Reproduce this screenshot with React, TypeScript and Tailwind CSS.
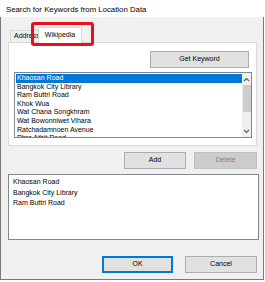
import { ReactNode } from "react";

const font = { fontFamily: '"Liberation Sans", Arial, sans-serif' };

function Chevron({ up }: { up?: boolean }) {
  return (
    <svg width="7" height="5" viewBox="0 0 7 5" className="block">
      <path d={up ? "M1 4 L3.5 1.5 L6 4" : "M1 1 L3.5 3.5 L6 1"} fill="none" stroke="#606060" strokeWidth="1.2" />
    </svg>
  );
}

function Button({ children, className = "", disabled = false, primary = false }: { children: ReactNode; className?: string; disabled?: boolean; primary?: boolean }) {
  return (
    <div
      className={`flex h-[17px] items-center justify-center border text-[7px] ${
        disabled
          ? "border-[#bfbfbf] bg-[#cccccc] text-[#838383]"
          : primary
            ? "border-[#0078d7] bg-[#e1e1e1] text-black shadow-[inset_0_0_0_1px_#0078d7]"
            : "border-[#adadad] bg-[#e1e1e1] text-black"
      } ${className}`}
    >
      {children}
    </div>
  );
}

const places = [
  "Khaosan Road",
  "Bangkok City Library",
  "Ram Buttri Road",
  "Khok Wua",
  "Wat Chana Songkhram",
  "Wat Bowonniwet Vihara",
  "Ratchadamnoen Avenue",
  "Phra Athit Road",
];

const chosen = ["Khaosan Road", "Bangkok City Library", "Ram Buttri Road"];

export default function App() {
  return (
    <div className="h-[282px] w-[265px] overflow-hidden bg-white text-black" style={font}>
      <div className="h-[17px] pl-[6px] pt-[5px] text-[7.8px] leading-[10px]">Search for Keywords from Location Data</div>

      <div className="relative h-[263px] w-[264px] border-x border-b border-[#7a7a7a] bg-[#f0f0f0] pl-[7px] pt-[10px]">
        {/* tabs */}
        <div className="relative z-10 -mb-px flex h-[16px] items-end pl-[2px]">
          <div className="mb-px flex h-[12px] w-[30px] items-center border-x border-t border-[#d9d9d9] bg-[#f0f0f0] pl-[3px] text-[7px]">
            Address
          </div>
          <div className="-ml-[2px] flex h-[16px] w-[44px] items-center justify-center border-x border-t border-[#d9d9d9] bg-white text-[7px]">
            Wikipedia
          </div>
        </div>
        <div className="absolute left-[30px] top-[5px] z-20 h-[24px] w-[63px] rounded-[3px] border-[3px] border-[#e8101a]" />

        {/* panel */}
        <div className="h-[104px] w-[249px] border border-[#d9d9d9] bg-white pt-[8px]">
          <div className="flex justify-end pr-[7px]">
            <Button className="w-[99px]">Get Keyword</Button>
          </div>
          <div className="ml-[5px] mt-[4px] flex h-[66px] w-[238px] border border-[#828790] bg-white">
            <div className="flex-1 overflow-hidden pl-px pt-px">
              {places.map((p, i) => (
                <div
                  key={p}
                  className={`h-[8.6px] pl-px text-[7px] leading-[8.6px] whitespace-nowrap ${i === 0 ? "bg-[#0078d7] text-white" : ""}`}
                >
                  {p}
                </div>
              ))}
            </div>
            <div className="flex w-[9px] flex-col items-center bg-[#f0f0f0]">
              <div className="flex h-[12px] items-center">
                <Chevron up />
              </div>
              <div className="h-[27px] w-[8px] bg-[#cdcdcd]" />
              <div className="flex-1" />
              <div className="flex h-[12px] items-center">
                <Chevron />
              </div>
            </div>
          </div>
        </div>

        <div className="mt-[6px] flex justify-end gap-[8px] pr-[6px]">
          <Button className="w-[62px]">Add</Button>
          <Button disabled className="w-[63px]">Delete</Button>
        </div>

        <div className="mt-[5px] h-[66px] w-[251px] border border-[#828790] bg-white pl-[4px] pt-[2px]">
          {chosen.map((c) => (
            <div key={c} className="h-[10.5px] text-[7px] leading-[10.5px]">
              {c}
            </div>
          ))}
        </div>

        <div className="mt-[16px] flex justify-end gap-[12px] pr-[6px]">
          <Button primary className="w-[71px]">OK</Button>
          <Button className="w-[72px]">Cancel</Button>
        </div>
      </div>
    </div>
  );
}
